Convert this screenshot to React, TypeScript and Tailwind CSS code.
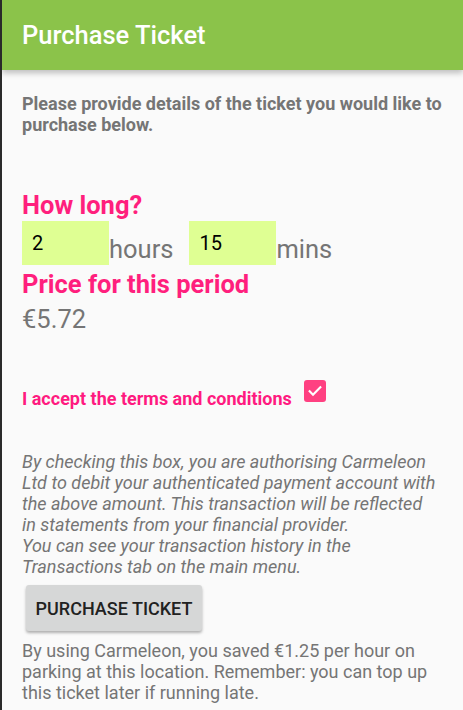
import React from 'react';

const App: React.FC = () => {
    return (
        <div className="w-[463px] h-[710px] overflow-hidden bg-[#fafafa] border-l-2 border-[#2a2a2a] font-['Roboto',sans-serif]">
            {/* Toolbar */}
            <header className="h-[70px] bg-[#8bc34a] shadow-[0_3px_6px_rgba(0,0,0,0.25)] flex items-center px-[20px] pt-[2px] relative z-10">
                <h1 className="text-white text-[25.5px] font-medium leading-none">Purchase Ticket</h1>
            </header>

            <main className="pl-[20px] pr-[18px]">
                <p className="mt-[23px] text-[18px] leading-[21px] font-bold text-[#757575]">
                    Please provide details of the ticket you would like to purchase below.
                </p>

                {/* Duration */}
                <h2 className="mt-[55px] text-[25.5px] leading-[30px] font-bold text-[#ff1f7d]">How long?</h2>
                <div className="flex items-end mt-[1px]">
                    <div className="w-[87px] h-[44px] bg-[#dfff93] flex items-center pl-[10px] text-[20px] text-black">2</div>
                    <span className="text-[25.5px] leading-[30px] text-[#757575] mb-[1px]">hours</span>
                    <div className="w-[87px] h-[44px] bg-[#dfff93] flex items-center pl-[10px] ml-[16px] text-[20px] text-black">15</div>
                    <span className="text-[25.5px] leading-[30px] text-[#757575] mb-[1px]">mins</span>
                </div>

                <h2 className="mt-[4px] text-[25.5px] leading-[30px] font-bold text-[#ff1f7d]">Price for this period</h2>
                <div className="mt-[5px] text-[25.5px] leading-[30px] text-[#757575]">€5.72</div>

                {/* Terms */}
                <div className="flex items-start mt-[46px]">
                    <span className="mt-[8px] text-[18px] leading-[22px] font-bold text-[#ff1a80]">I accept the terms and conditions</span>
                    <span className="ml-[12px] w-[22px] h-[22px] rounded-[3px] bg-[#ff4081] flex items-center justify-center">
                        <svg width="16" height="16" viewBox="0 0 24 24" fill="none" stroke="white" strokeWidth="3.2" strokeLinecap="square">
                            <path d="M4 12.5l5 5L20 6.5" />
                        </svg>
                    </span>
                </div>

                <p className="mt-[41px] pr-[6px] text-[18px] leading-[21px] italic text-[#757575]">
                    By checking this box, you are authorising Carmeleon Ltd to debit your authenticated payment account with the above amount. This transaction will be reflected in statements from your financial provider.
                    <br />
                    You can see your transaction history in the Transactions tab on the main menu.
                </p>

                <button className="mt-[8px] ml-[4px] w-[176px] h-[46px] rounded-[3px] bg-[#d6d7d7] shadow-[0_2px_3px_rgba(0,0,0,0.3)] text-[18px] font-medium text-[#212121]">
                    PURCHASE TICKET
                </button>

                <p className="mt-[9px] text-[18px] leading-[21px] text-[#757575]">
                    By using Carmeleon, you saved €1.25 per hour on parking at this location. Remember: you can top up this ticket later if running late.
                </p>
            </main>
        </div>
    );
};

export default App;
